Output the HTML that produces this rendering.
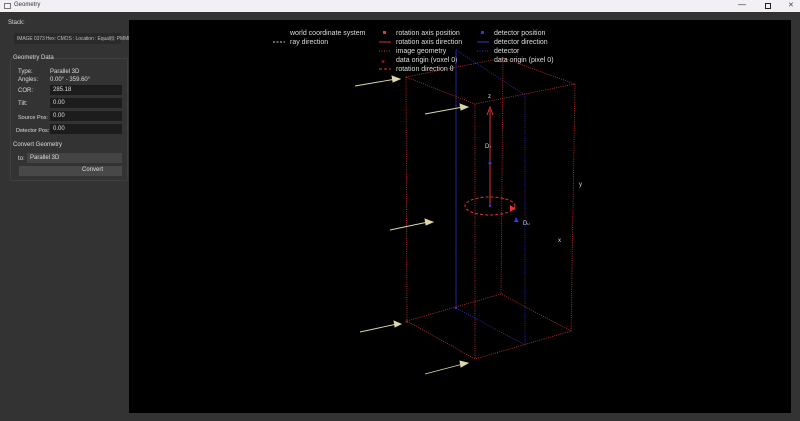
<!DOCTYPE html>
<html><head><style>
body{margin:0;width:800px;height:421px;background:#333;overflow:hidden;font-family:"Liberation Sans",sans-serif;color:#ddd;position:relative}
.t{position:absolute;white-space:nowrap}
.title{position:absolute;left:0;top:0;width:800px;height:12px;background:#f3f0f5}
.in{position:absolute;background:#1c1c1c;height:9px}
</style></head><body>
<div class="title"></div>
<div class="t" style="left:4px;top:3px;width:5px;height:4px;border:1px solid #777"></div>
<div class="t" style="left:14px;top:2px;font-size:6px;color:#333">Geometry</div>
<div class="t" style="left:738px;top:0px;font-size:8px;color:#222">—</div>
<div class="t" style="left:765px;top:3px;width:4px;height:4px;border:1px solid #222"></div>
<div class="t" style="left:788px;top:1px;font-size:7px;color:#444">✕</div>
<div class="t" style="left:8px;top:20px;font-size:6px">Stack:</div>
<div class="in" style="left:14px;top:33px;width:107px;height:11px;background:#2a2a2a"></div>
<div class="t" style="left:17px;top:35.5px;font-size:5px;color:#bbb;letter-spacing:-0.1px">IMAGE 0373 Hex: CMOS : Location : Equal(t): PMMI</div>
<div class="t" style="left:10px;top:58px;width:116px;height:121px;border:1px solid #3f3f3f;border-radius:2px"></div>
<div class="t" style="left:13px;top:55px;font-size:6px;background:#333">Geometry Data</div>
<div class="t" style="left:18px;top:69px;font-size:6px">Type:</div><div class="t" style="left:50px;top:69px;font-size:6px">Parallel 3D</div>
<div class="t" style="left:18px;top:77px;font-size:6px">Angles:</div><div class="t" style="left:50px;top:77px;font-size:6px">0.00° - 359.60°</div>
<div class="t" style="left:18px;top:88px;font-size:6px">COR:</div><div class="in" style="left:50px;top:85px;width:72px;height:10px"></div><div class="t" style="left:53px;top:87px;font-size:6px">285.18</div>
<div class="t" style="left:18px;top:101px;font-size:6px">Tilt:</div><div class="in" style="left:50px;top:98px;width:72px;height:10px"></div><div class="t" style="left:53px;top:100px;font-size:6px">0.00</div>
<div class="t" style="left:18px;top:115px;font-size:5.5px">Source Pos:</div><div class="in" style="left:50px;top:111px;width:72px;height:10px"></div><div class="t" style="left:53px;top:113px;font-size:6px">0.00</div>
<div class="t" style="left:16px;top:128px;font-size:5.5px">Detector Pos:</div><div class="in" style="left:50px;top:124px;width:72px;height:10px"></div><div class="t" style="left:53px;top:126px;font-size:6px">0.00</div>
<div class="t" style="left:13px;top:142px;font-size:6px">Convert Geometry</div>
<div class="t" style="left:18px;top:156px;font-size:6px">to:</div><div class="in" style="left:27px;top:153px;width:95px;height:10px;background:#444"></div><div class="t" style="left:30px;top:155px;font-size:6px">Parallel 3D</div>
<div class="in" style="left:19px;top:166px;width:103px;height:10px;background:#484848"></div><div class="t" style="left:82px;top:167px;font-size:6px">Convert</div>
<svg class="t" style="left:129px;top:20px" width="662" height="393" viewBox="129 20 662 393">
<rect x="129" y="20" width="662" height="393" fill="#000"/>
<g font-family="Liberation Sans" font-size="7" fill="#ddd">
<text x="290" y="35">world coordinate system</text>
<text x="290" y="44">ray direction</text>
<text x="396" y="35">rotation axis position</text>
<text x="396" y="44">rotation axis direction</text>
<text x="396" y="53">image geometry</text>
<text x="396" y="62">data origin (voxel 0)</text>
<text x="396" y="71">rotation direction θ</text>
<text x="494" y="35">detector position</text>
<text x="494" y="44">detector direction</text>
<text x="494" y="53">detector</text>
<text x="494" y="62">data origin (pixel 0)</text>
<text x="488" y="98" font-size="6">z</text><text x="579" y="186" font-size="6">y</text><text x="558" y="242" font-size="6">x</text>
<text x="485" y="148" font-size="6">D<tspan font-size="4">v</tspan></text><text x="523" y="225" font-size="6">D<tspan font-size="4">u</tspan></text>
</g>
<line x1="273" y1="42" x2="285" y2="42" stroke="#ccc" stroke-dasharray="2 1.5"/>
<rect x="383" y="31" width="3" height="3" fill="#e33"/>
<line x1="379" y1="42" x2="391" y2="42" stroke="#c33"/>
<line x1="379" y1="51" x2="391" y2="51" stroke="#c33" stroke-dasharray="1 1.5"/>
<text x="381" y="64" font-size="7" fill="#e33">×</text>
<line x1="379" y1="69" x2="391" y2="69" stroke="#e33" stroke-dasharray="3 2"/>
<rect x="481" y="31" width="3" height="3" fill="#33e"/>
<line x1="477" y1="42" x2="489" y2="42" stroke="#33c"/>
<line x1="477" y1="51" x2="489" y2="51" stroke="#33c" stroke-dasharray="1 1.5"/>
<g stroke="#3333cc" stroke-width="0.8" stroke-dasharray="1 1.2" fill="none">
<path d="M456 50 L525 95 L525 345 L456 308 Z M456 50 L456 308"/>
</g>
<g stroke="#c33" stroke-width="0.8" stroke-dasharray="1 1.2" fill="none">
<path d="M406 77 L503 58 L575 84 L475 104 Z M407 321 L501 294 L571 331 L475 359 Z M406 77 L407 321 M503 58 L501 294 M575 84 L571 331 M475 104 L475 359"/>
</g>
<line x1="490" y1="205" x2="490" y2="110" stroke="#d33"/>
<path d="M487 115 L490 107 L493 115" fill="none" stroke="#d33"/>
<ellipse cx="490" cy="206" rx="25" ry="9" fill="none" stroke="#d33" stroke-dasharray="3 2"/>
<path d="M510 205 L516 209 L510 211Z" fill="#e33"/>
<path d="M488 164 L490 160 L492 164Z" fill="#33e"/><path d="M514 222 L516 217 L519 222Z" fill="#33e"/>
<circle cx="490" cy="206" r="1.2" fill="#33e"/><circle cx="456" cy="308" r="1.2" fill="#33e"/>
<text x="405" y="324" font-size="6" fill="#e33">×</text>
<g stroke="#ddd8a8" stroke-width="0.9" fill="#ddd8a8">
<line x1="355" y1="86" x2="396" y2="79"/><path d="M392 76 L400 79 L393 82Z"/>
<line x1="425" y1="114" x2="463" y2="107"/><path d="M460 104 L468 107 L461 110Z"/>
<line x1="390" y1="230" x2="428" y2="222"/><path d="M425 219 L433 222 L426 225Z"/>
<line x1="360" y1="332" x2="397" y2="324"/><path d="M394 321 L401 324 L395 327Z"/>
<line x1="425" y1="374" x2="463" y2="364"/><path d="M460 361 L468 363 L461 367Z"/>
</g>
</svg>
</body></html>
